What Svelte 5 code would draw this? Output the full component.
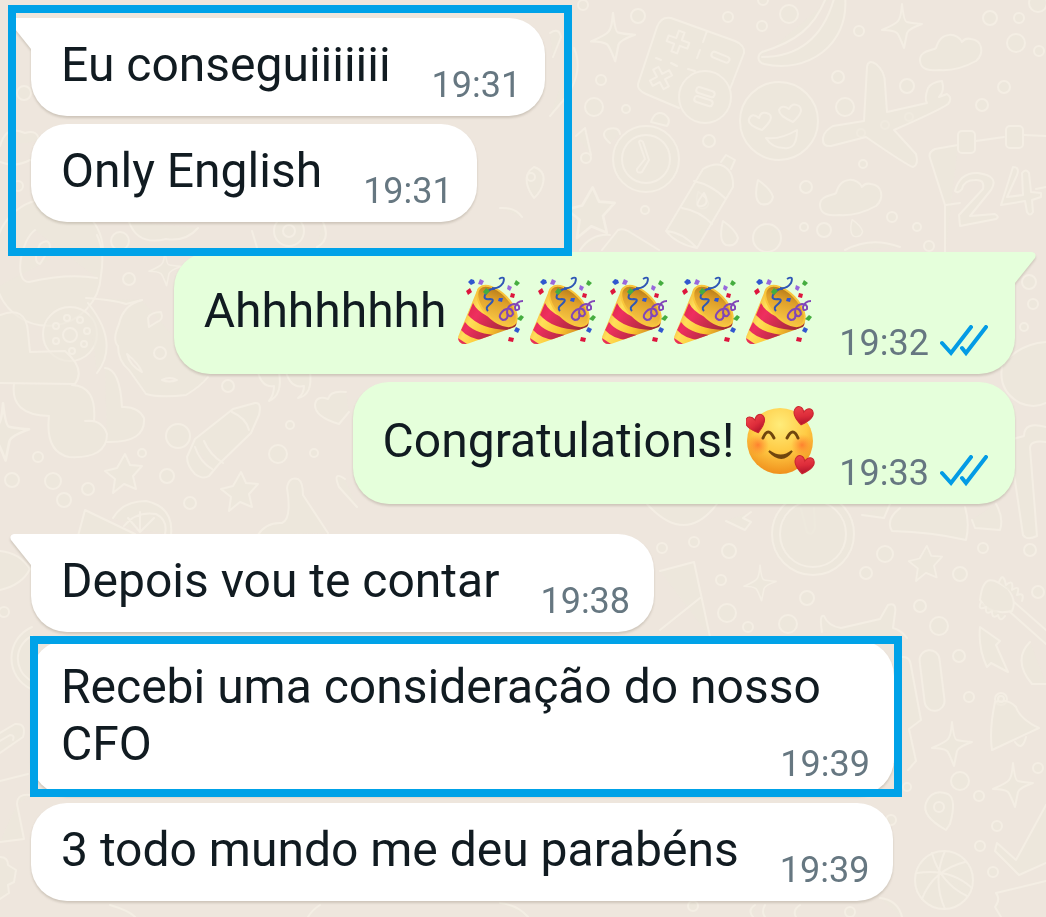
<script>
  const blocks = [
    {
      marked: 'wide',
      messages: [
        { text: 'Eu conseguiiiiiii', time: '19:31', tail: true },
        { text: 'Only English', time: '19:31' }
      ]
    },
    {
      sent: true,
      messages: [
        { text: 'Ahhhhhhhh', emoji: 'party', label: '🎉', count: 5, time: '19:32', tail: true },
        { text: 'Congratulations!', emoji: 'love', label: '🥰', count: 1, time: '19:33' }
      ]
    },
    { messages: [{ text: 'Depois vou te contar', time: '19:38', tail: true }] },
    { marked: 'tight', messages: [{ text: 'Recebi uma consideração do nosso CFO', time: '19:39' }] },
    { messages: [{ text: '3 todo mundo me deu parabéns', time: '19:39' }] }
  ]

  // x, y, radius of the loose bubbles between the doodles
  const dots = [
    [583, 5, 5], [638, 16, 7], [601, 80, 5], [594, 107, 9], [626, 109, 4], [728, 17, 5], [762, 26, 5], [789, 14, 9],
    [763, 0, 5], [859, 31, 5], [990, 18, 7], [1019, 18, 5], [1016, 43, 9], [1039, 51, 5], [838, 77, 6], [845, 107, 9],
    [907, 86, 7], [909, 117, 4], [885, 125, 4], [861, 133, 4], [1004, 87, 6], [982, 105, 6], [709, 141, 6], [863, 164, 4],
    [645, 210, 4], [806, 187, 6], [804, 227, 4], [824, 230, 7], [892, 217, 5], [917, 227, 4], [929, 246, 5], [1038, 3, 9],
    [129, 279, 6], [120, 241, 9], [228, 386, 6], [178, 436, 12], [38, 457, 5], [53, 481, 8], [12, 480, 7], [88, 489, 6],
    [64, 500, 7], [142, 453, 4], [167, 476, 7], [190, 503, 6], [290, 425, 4], [278, 454, 9], [314, 453, 4],
    [694, 542, 5], [662, 548, 5], [729, 551, 7], [721, 580, 5], [727, 613, 9], [807, 598, 7], [748, 627, 5], [788, 624, 9],
    [885, 554, 8], [866, 573, 6], [960, 574, 7], [983, 548, 5], [1030, 550, 6], [1038, 592, 6], [920, 606, 6], [939, 626, 9],
    [959, 656, 6], [969, 697, 5], [1001, 699, 6], [960, 781, 9], [979, 796, 5], [997, 826, 5], [1038, 768, 5], [980, 846, 5],
    [993, 872, 5], [891, 820, 5], [907, 787, 4], [693, 906, 5], [850, 912, 5], [1029, 282, 7], [1033, 304, 5], [1024, 327, 4],
    [24, 93, 7], [18, 186, 5], [4, 612, 5]
  ]

  // x, y, scale
  const sparkles = [
    [613, 37, 1.1], [902, 26, 1], [3, 432, 1.3], [760, 583, 0.8], [952, 744, 1], [1013, 785, 1], [165, 268, 0.8]
  ]
  const stars = [[123, 473, 1], [239, 491, 1], [925, 563, 0.9], [590, 212, 1.3]]
  const clouds = [[951, 52, 1], [851, 197, 1]]
  const drops = [[765, 192, 1], [730, 233, 1], [857, 228, 0.7], [703, 200, 0.7]]
</script>

<svg class="wallpaper" viewBox="0 0 1046 917" preserveAspectRatio="xMidYMin slice" aria-hidden="true">
  <defs>
    <path id="sparkle" d="M0-22Q2-4 5-4Q8-3 20-2Q6 3 5 7Q4 12 2 22Q-3 9-5 7Q-9 4-20 4Q-6-2-4-5Q-1-8 0-22z" />
    <path id="star" d="M2-19l5 11 12 1-9 10 3 13-12-5-11 9 2-14-10-8 12-3z" />
    <path id="cloud" d="M-15-4C-18-1-32-2-31 9C-30 18-21 19-12 18C3 19 16 14 25 9C34 1 31-12 20-13C16-14 13-13 11-10C7-19-10-22-15-4z" />
    <path id="drop" d="M-7-12Q-12 8-4 12Q6 14 8 5Q6-3-7-12z" />
    <path id="cross" d="M-3-11h6v8h8v6H3v8h-6V3h-8v-6h8z" />
  </defs>
  {#each dots as [x, y, r]}
    <circle cx={x} cy={y} {r} />
  {/each}
  {#each sparkles as [x, y, s]}
    <use href="#sparkle" transform="translate({x} {y}) scale({s})" />
  {/each}
  {#each stars as [x, y, s]}
    <use href="#star" transform="translate({x} {y}) scale({s})" />
  {/each}
  {#each clouds as [x, y, s]}
    <use href="#cloud" transform="translate({x} {y}) scale({s})" />
  {/each}
  {#each drops as [x, y, s]}
    <use href="#drop" transform="translate({x} {y}) scale({s})" />
  {/each}

  <!-- calculator -->
  <path d="M679 108l-33-14q-9-4-8-10l19-57q4-11 14-9l64 23q10 4 9 12l-14 36M707 31l-4 11m-47 16l5 2m10 3l6 3m11 3l7 2m5-21l-3 8" />
  <use href="#cross" transform="translate(678 42) rotate(20)" />
  <use href="#cross" transform="translate(661 78) rotate(62)" />
  <rect x="711" y="54" width="19" height="6" rx="3" transform="rotate(22 720 57)" />
  <circle cx="705" cy="97" r="26" />
  <rect x="696" y="89" width="19" height="6" rx="3" transform="rotate(18 705 92)" />
  <rect x="694" y="98" width="19" height="6" rx="3" transform="rotate(18 703 101)" />
  <!-- banana -->
  <path d="M827-5C815 28 795 42 762 52c-5 3-5 10 2 12c42 10 86-18 81-68M835-5C826 30 805 57 762 57" />
  <!-- face with heart eyes -->
  <circle cx="779" cy="121" r="39" />
  <path d="M762 130q-15-5-13-11q3-7 10-1q2-8 10-4q6 4-7 16zM793 122q-14-6-14-12q3-6 10-1q3-7 10-3q6 5-6 16zM766 138q14 2 31-8q0 20-13 18q-12 0-18-10z" />
  <!-- plane -->
  <path d="M864 121l3-54q1-8 9-3q9 7 9 20l2 28 40-9q-3-4 1-15q4-6 14-7q3 10-3 16l8-3q6 4 1 10q-8 6-54 26l22 24q3 11-3 13q-5-1-47-30l-35 9q-9 1-8-8q1-7 10-12z" />
  <!-- alarm clock -->
  <path d="M610 143q-11-9-2-14q11-3 12 5M651 122q4-12 13-8q8 5 3 12z" />
  <circle cx="646" cy="159" r="33" /><circle cx="646" cy="159" r="24" />
  <path d="M639 142l6 17-8 10q-1 5 5 3l7-12-6-18q-3-3-4 0z" />
  <!-- bottle -->
  <path d="M666 231l37-62q10-6 18-4q13 5 12 22l-36 61q-21-4-31-17q16 1 31 17M694 181q18 4 32 18M682 208q18 3 30 16M721 162l5-7 9 5-4 9M704 193q-12 15-2 13q8-2 2-13z" />
  <!-- calendar -->
  <path d="M958 145l-23 4q-7 3-5 9l15 47v50M976 141l28-4m20-2l22 1M946 205l14-2m76-14l10-2" />
  <rect x="958" y="131" width="17" height="22" rx="4" /><rect x="1006" y="126" width="17" height="22" rx="4" />
  <path d="M955 191q5-19 23-18q22 3 13 17l-21 26 25-2q5 3 1 5l-36 7-1-11 24-26q2-10-8-9q-11 0-13 9q-4 5-7 2zM1013 167q7 0 4 8l-10 22 16-2-1-22q4-5 7 0l2 19 10 1v4l-9 3 1 12q-3 5-6 0l-2-11-24 4z" />
  <!-- note, balloon and hearts behind the received messages -->
  <path d="M576 136l9-8 6 27M534 167c-14 9-5 24 0 31c9-8 16-26 0-31zM550 33q9-6 11 4l-8 20M574 48q10 22-7 48l-17 20" />
  <path d="M580 250q12-17 30-15M602 250l16-20q5-2 10 1l31 19M500 208q15-1 22 9M845 250q26-14 55-3" />
  <circle cx="531" cy="177" r="4" /><circle cx="767" cy="238" r="14" />
  <circle cx="586" cy="158" r="5" />
  <!-- helmet and film roll -->
  <path d="M-4 250a53 53 0 1 1 107 5M35 230c-14 10-22 52-6 52q38-9 68-4M97 235q8 17 4 40a53 53 0 0 1-104 12M40 244q10-7 10 4l-10 16q-8-2 0-20zM129 222q9 24 37 17q20 3 32-11M252 231l6 20M323 222q8 18-6 25" />
  <circle cx="289" cy="231" r="15" /><circle cx="289" cy="231" r="6" />
  <circle cx="70" cy="334" r="27" /><circle cx="70" cy="335" r="7" />
  <circle cx="67" cy="318" r="3" /><circle cx="80" cy="320" r="3" /><circle cx="87" cy="331" r="3" />
  <circle cx="84" cy="344" r="3" /><circle cx="72" cy="351" r="3" /><circle cx="56" cy="341" r="3" /><circle cx="56" cy="326" r="3" />
  <!-- glove and blossoms -->
  <path d="M0 315q26-10 28 17l2 20 35-1q21 18 10 33l-75-1M14 384q-4 31 35 32q-4 36 20 41q38 2 38-23q-5-15-22-13l9 0q3-35-22-36M107 442q39 1 37-24q-6-12-22-11q-2-38-17-39M86 298q28 2 40 6l16-4M88 303q32 40 9 70" />
  <!-- doughnut -->
  <path d="M142 300q-19 5-23 24q-7 16-1 22q0 15 11 24l17 24q14 4 40 1q15-9 22-18M148 318q3-6 13-6q3 8-4 10l-8 5zM127 354q12 10 15 18q-12-6-15-18zM162 380q8-4 15 0q-8 3-15 0z" />
  <circle cx="160" cy="353" r="6" />
  <!-- quotes and heart -->
  <path d="M258 372q4 16 16 14q0 9-5 15q14-6 10-29M286 372q5 17 18 14q0 8-6 12q15-3 12-26M346 392q-16-2-18 7q-12-4-13 6q0 12 24 19l10-12" />
  <!-- crayon -->
  <path d="M187 457l8-18 38-30 22-6q7-1 4 12l-8 18-32 31-10 12q-6 4-14-2q-8-8-8-17zM232 412q14 6 17 18M204 441q6 14 19 22M195 447q5 15 17 22" />
  <!-- lemon and hand -->
  <path d="M78 536l7-26 50 24M113 518q10-17 33-17q28 6 25 34M124 526q12-15 32-12q12 6 9 20M140 512v20m-12-14l12 14 14-14M258 535q8-13 24-12q10-4 5-35q2-12 11-9q5 3 5 16l25 38M345 479q-13-9-6 8l18 20" />
  <path d="M1046 427q-22-6-22 9l-15 4 14 95q4 6 14 1l-7-88q0-8 16-6M1046 342q-28 2-44 24q-4 25 18 37q14 6 26 0" />
  <!-- gauge and bowls -->
  <path d="M647 504q38 42 70 0M726 521l19 9 6-8-8-4 8-6M801 509l6 23q5 5 8-4l-1-20M862 515l22 3 6-14M900 508q-15 12-8 23q40 1 74 9q4-17-1-33M972 520l3 8 25 2q4-12-4-26" />
  <circle cx="813" cy="534" r="41" /><circle cx="813" cy="534" r="33" />
  <!-- shirt and guitar -->
  <path d="M660 571l34-9 16 75M660 630l40-32M822 632q-3-18 2-16q4 10 17 12l39-9 8-14q9-3 7 8l-2 15q8 2 14 10M980 600c3-27 14-22 28-11q9 12 4 22q-22 5-32-11zM1014 602l32 28M1010 612l36 32" />
  <path d="M999 582q4-11 7 3q8-7 6 5q9-6 5 5q8-3 5 6M981 602q-4 9 5 5q-1 9 6 4q0 9 6 4q2 8 7 1M980 627l20 14-4 4 12 27-17-9-4 4q-9-18-7-40zM1030 642q-18 18 2 42l14 0" />
  <rect x="922" y="650" width="20" height="61" rx="10" transform="rotate(-7 932 680)" />
  <path d="M902 657q8-1 9 9l10 54-12 9 7 32-8 9" />
  <!-- bell -->
  <path d="M995 702q-6 28-3 48l47-22q-19-9-23-21q-8-9-21-5zM1015 742q7 10 11-5" /><circle cx="1001" cy="699" r="3" />
  <!-- pin and ball -->
  <path d="M946 830q-25-14-20-27q6-15 22-9q9 5 2 30z" /><circle cx="939" cy="807" r="5" />
  <circle cx="944" cy="880" r="29" />
  <path d="M917 873q33-5 55 15M932 853q8 30 35 43M922 899q11-29 43-37M945 851q-13 29 0 58" />
  <path d="M1046 805l-30 55-19-17-2 8 24 24 27-12M996 893l50-12M996 893q5 6-1 14l6 10" />
  <!-- soft shapes along the left edge and the bottom -->
  <path d="M0 146q6-22 25-13q13-4 14 8M0 162q15 6 30-2M0 551q20 2 30 18q-8 16-30 21M32 627a34 34 0 0 0-1 62M32 636a25 25 0 0 0-2 44M0 733l15-9q12-1 8 13L0 753M0 741l10-6q5 0 3 5M0 781l28-7M17 804q0-11 14-9M17 804l7 35L0 842M0 857q8 0 8 8l8 5-2 12-6 3 1 8-9 6M755 905q-8 5-2 12M765 905q-4 7 0 12M800 905q-8 5-4 12M880 898q18 2 22 19M110 905q20 6 25 12M320 905q-8 5-12 12M500 903q18 2 28 14" />
</svg>

<main class="chat">
  {#each blocks as block}
    <section class="block {block.marked ?? ''}" class:sent={block.sent} class:marked={block.marked}>
      {#each block.messages as message}
        <article class="bubble" class:tail={message.tail}>
          {#if message.tail}
            <svg class="corner" viewBox="0 0 36 36" aria-hidden="true">
              <path d="M36 0H4Q-1 1 1 6L21 31L36 36z" />
            </svg>
          {/if}
          <p>
            {message.text}
            {#if message.emoji}
              <span class="emojis" role="img" aria-label={message.label.repeat(message.count)}>{#each Array(message.count) as _}{#if message.emoji === 'party'}{@render party()}{:else}{@render love()}{/if}{/each}</span>
            {/if}
            <span class="meta">
              <time>{message.time}</time>
              {#if block.sent}
                <svg class="checks" viewBox="0 0 48 32" role="img" aria-label="Read">
                  <path d="M2 18l9 10L31 2M22 23l4 5L46 2" />
                </svg>
              {/if}
            </span>
          </p>
        </article>
      {/each}
    </section>
  {/each}
</main>

{#snippet party()}
  <svg class="emoji" viewBox="0 0 72 81">
    <defs>
      <linearGradient id="cone" x1="0" y1="0.3" x2="1" y2="0.8">
        <stop offset="0" stop-color="#e89a2a" />
        <stop offset="0.25" stop-color="#ffdf5a" />
        <stop offset="0.5" stop-color="#fbc62f" />
        <stop offset="0.8" stop-color="#c4761d" />
      </linearGradient>
      <linearGradient id="band" x1="0" y1="0" x2="1" y2="0.5">
        <stop offset="0" stop-color="#d9243f" />
        <stop offset="0.35" stop-color="#ee2f5f" />
        <stop offset="1" stop-color="#93292f" />
      </linearGradient>
      <linearGradient id="mouth" x1="0" y1="0" x2="1" y2="1">
        <stop offset="0" stop-color="#a0680f" />
        <stop offset="0.4" stop-color="#dfa02a" />
        <stop offset="1" stop-color="#ffd34d" />
      </linearGradient>
      <clipPath id="body"><path d="M20 18L0 67Q0 75 9 74L57 57Q64 47 44 28Q30 14 20 18z" /></clipPath>
    </defs>
    <g clip-path="url(#body)">
      <path fill="url(#cone)" d="M0 10h72v71H0z" />
      <path fill="url(#band)" d="M15 33Q23 50 62 54L50 60Q22 59 10 45zM7 52Q15 63 36 65L24 70Q10 68 3 60zM0 68l12 8H0z" />
    </g>
    <ellipse cx="39" cy="36" rx="25" ry="13" transform="rotate(46 39 36)" fill="url(#mouth)" stroke="#f9c63c" stroke-width="2" />
    <path class="ribbon" stroke="#2f57b5" d="M41 9q7-4 4 4q-4 6-11 5M37 19q-6-1-10 6q-2 5 5 4q6 0-1 6q-4 3-1 6" />
    <path class="ribbon" stroke="#8146b8" d="M65 31q-6 0-8 6q0 5 4 2q1-5-5-5q-7 1-7 9q3 6 6 1q-1-8-9-4q-8 7-1 10q6 0 4-8" />
    <path fill="#3157cf" d="M13 9l3 1 1 3-4 2-3-3zM41 28l4 0-1 4-4-1zM58 57l4 2-2 4-4-2z" />
    <path fill="#9868dc" d="M22 9l4 2-2 4-4-1zM50 15l4 2-2 4-3-2z" />
    <path fill="#45ad3f" d="M58 10l4 3-3 3-3-2zM28 18l4 3-4 4-3-3zM63 45l3 2-3 4-4-2z" />
    <path fill="#dd153d" d="M12 18l2 4-4 3-2-4zM53 23l4 1-1 4-4-1zM51 67l5 1-1 4-5-1z" />
  </svg>
{/snippet}

{#snippet love()}
  <svg class="emoji" viewBox="0 0 72 81">
    <defs>
      <radialGradient id="skin" cx="0.5" cy="0.25" r="0.75">
        <stop offset="0" stop-color="#ffec7a" />
        <stop offset="0.55" stop-color="#ffcb45" />
        <stop offset="1" stop-color="#f0901c" />
      </radialGradient>
      <radialGradient id="blush">
        <stop offset="0" stop-color="#ff702b" stop-opacity="0.8" />
        <stop offset="1" stop-color="#ff8a2b" stop-opacity="0" />
      </radialGradient>
      <linearGradient id="red" x1="0" y1="0" x2="0.4" y2="1">
        <stop offset="0" stop-color="#f0484c" />
        <stop offset="0.6" stop-color="#dd2c3a" />
        <stop offset="1" stop-color="#b5152c" />
      </linearGradient>
      <path id="heart" d="M0 9C-9 3-11-2-9-6C-7-10-2-9 0-4C2-9 7-10 9-6C11-2 8 3 0 9z" fill="url(#red)" stroke="#c9242f" />
    </defs>
    <circle cx="34" cy="41" r="33" fill="url(#skin)" />
    <circle cx="12" cy="45" r="11" fill="url(#blush)" /><circle cx="56" cy="45" r="11" fill="url(#blush)" />
    <g fill="none" stroke="#70460e" stroke-width="3" stroke-linecap="round">
      <path d="M17 38q5-12 11 0M41 38q6-12 11 0" />
      <path fill="#70460e" stroke-width="2" d="M23 51q12 9 23 0q-10 14-23 0z" />
    </g>
    <use href="#heart" transform="translate(10 24) rotate(-15)" />
    <use href="#heart" transform="translate(57 16) rotate(12)" />
    <use href="#heart" transform="translate(58 65) rotate(12)" />
  </svg>
{/snippet}

<style>
  :global(body) {
    margin: 0;
    background: #eee6dd;
  }

  .wallpaper {
    position: absolute;
    inset: 0;
    width: 100%;
    height: 100%;
    fill: #ece7dc;
    fill-opacity: 0.6;
    stroke: #f4eee4;
    stroke-width: 2;
    stroke-linecap: round;
    stroke-linejoin: round;
  }

  .chat {
    position: relative;
    display: flex;
    flex-direction: column;
    align-items: flex-start;
    gap: 8px;
    padding: 18px 31px 16px;
    font-family: Roboto, "Liberation Sans", sans-serif;
    font-size: 48px;
    line-height: 57px;
    color: #111b21;
  }

  .block {
    position: relative;
    display: flex;
    flex-direction: column;
    align-items: flex-start;
    gap: 8px;
    max-width: calc(100% - 121px);
  }

  .sent {
    align-self: flex-end;
    align-items: flex-end;
    margin: 22px 0;
  }

  .bubble {
    position: relative;
    box-sizing: border-box;
    padding: 18px 24px 23px 30px;
    border-radius: 36px;
    background: #fff;
    filter: drop-shadow(0 2px 1px rgba(80, 70, 50, 0.2));
  }

  .sent .bubble {
    padding-right: 27px;
    background: #e5ffdb;
  }

  .tail {
    border-top-left-radius: 0;
  }

  .sent .tail {
    border-radius: 36px 0 36px 36px;
  }

  .corner {
    position: absolute;
    top: 0;
    left: -21px;
    width: 36px;
    height: 36px;
    fill: #fff;
  }

  .sent .corner {
    left: auto;
    right: -21px;
    fill: #e5ffdb;
    transform: scaleX(-1);
  }

  p {
    margin: 0;
  }

  .meta {
    float: right;
    display: flex;
    align-items: center;
    gap: 11px;
    height: 42px;
    margin: 28px 0 -13px 41px;
    font-size: 36px;
    line-height: 42px;
    color: #667781;
  }

  .sent .meta {
    margin: 52px 0 -13px 21px;
  }

  .checks {
    width: 48px;
    height: 32px;
    margin-bottom: 4px;
    fill: none;
    stroke: #039be5;
    stroke-width: 4;
    stroke-linecap: round;
  }

  .emojis {
    white-space: nowrap;
  }

  .emoji {
    width: 72px;
    height: 81px;
    vertical-align: -24px;
  }

  .ribbon {
    fill: none;
    stroke-width: 2;
  }

  .marked {
    z-index: 1;
  }

  .marked::after {
    content: "";
    position: absolute;
    border: 8px solid #00a2e8;
    pointer-events: none;
  }

  .wide::after {
    inset: -13px -27px -34px -23px;
  }

  .tight::after {
    inset: -4px -8px -2px -1px;
  }
</style>
